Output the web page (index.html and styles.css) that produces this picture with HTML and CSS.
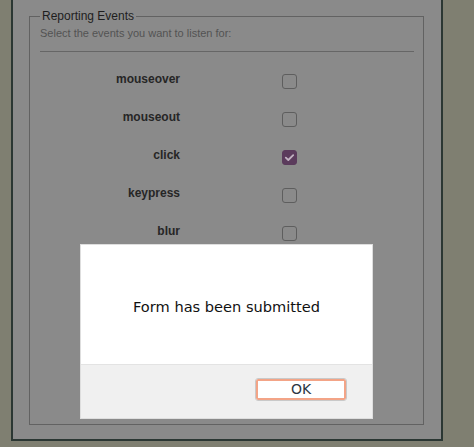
FILE: index.html
```html
<!DOCTYPE html>
<html>
<head>
<meta charset="utf-8">
<link rel="stylesheet" href="styles.css">
</head>
<body>
<div class="panel">
  <fieldset class="events">
    <legend class="events-title">Reporting Events</legend>
    <div class="hint">Select the events you want to listen for:</div>
    <div class="rule"></div>
    <div class="rows">
      <div class="row"><span class="label">mouseover</span><span class="box"></span></div>
      <div class="row"><span class="label">mouseout</span><span class="box"></span></div>
      <div class="row"><span class="label">click</span><span class="box checked"><svg viewBox="0 0 15 15" width="15" height="15"><path d="M3.8 7.6 L6.3 10 L11.2 5.2" fill="none" stroke="#c2b2c2" stroke-width="1.8" stroke-linecap="round" stroke-linejoin="round"/></svg></span></div>
      <div class="row"><span class="label">keypress</span><span class="box"></span></div>
      <div class="row"><span class="label">blur</span><span class="box"></span></div>
    </div>
  </fieldset>
</div>
<div class="dialog">
  <div class="dialog-body">Form has been submitted</div>
  <div class="dialog-footer"><button class="ok">OK</button></div>
</div>
</body>
</html>
```
FILE: styles.css
```css
html, body {
  margin: 0;
  padding: 0;
}
body {
  background: #7f7f71;
  width: 474px;
  height: 447px;
  overflow: hidden;
  position: relative;
  font-family: "Liberation Sans", Arial, sans-serif;
}
.panel {
  box-sizing: border-box;
  margin-left: 11px;
  width: 432px;
  height: 441px;
  background: #8a8a8a;
  border: 2px solid #2b3733;
  border-top: none;
  padding: 9px 0 14px 16px;
}
.events {
  box-sizing: border-box;
  margin: 0;
  width: 395px;
  height: 416px;
  border: 1px solid #626262;
  padding: 4px 9px 0 10px;
}
.events-title {
  padding: 0 2px;
  font-size: 12px;
  line-height: 14px;
  color: #1e1e1e;
}
.hint {
  font-size: 11px;
  line-height: 13px;
  color: #535353;
}
.rule {
  margin-top: 11px;
  border-top: 1px solid #666;
}
.rows {
  margin-top: 10px;
}
.row {
  height: 38px;
  display: flex;
  align-items: flex-start;
}
.label {
  width: 140px;
  text-align: right;
  font-weight: bold;
  font-size: 12px;
  line-height: 14px;
  margin-top: 10px;
  color: #262626;
}
.box {
  box-sizing: border-box;
  width: 15px;
  height: 15px;
  margin-top: 12px;
  margin-left: 102px;
  border: 1px solid #5e5e5e;
  border-radius: 3px;
  display: block;
}
.box.checked {
  background: #5b3b5c;
  border-color: #5b3b5c;
  position: relative;
}
.box.checked svg {
  position: absolute;
  left: -1px;
  top: -1px;
}
.dialog {
  position: absolute;
  left: 80px;
  top: 244px;
  width: 293px;
  height: 175px;
  box-sizing: border-box;
  border: 1px solid #dedede;
  background: #fff;
  display: flex;
  flex-direction: column;
  font-family: "DejaVu Sans", sans-serif;
}
.dialog-body {
  height: 119px;
  display: flex;
  align-items: center;
  justify-content: center;
  padding-top: 3px;
  box-sizing: border-box;
  font-size: 14.6px;
  color: #111;
}
.dialog-footer {
  flex: 1;
  background: #f0f0f0;
  border-top: 1px solid #e3e3e3;
  display: flex;
  justify-content: flex-end;
  align-items: flex-start;
  padding: 13px 25px 0 0;
}
.ok {
  box-sizing: border-box;
  width: 92px;
  height: 23px;
  background: #fff;
  border: 1px solid #c9c9c9;
  border-radius: 3px;
  box-shadow: inset 0 0 0 2px #f3a487;
  font-family: "DejaVu Sans", sans-serif;
  font-size: 14px;
  color: #2c3642;
  padding: 0;
  line-height: 19px;
}
```
